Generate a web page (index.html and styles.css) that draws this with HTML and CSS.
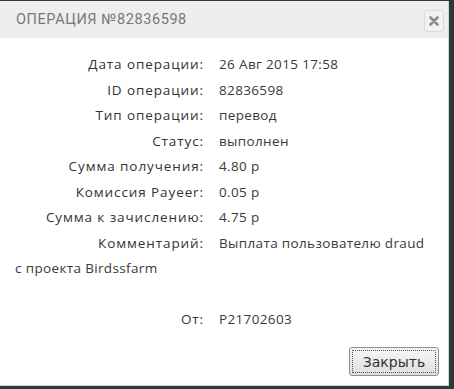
FILE: index.html
```html
<!DOCTYPE html>
<html lang="ru">
<head>
  <meta charset="UTF-8" />
  <title>Операция №82836598</title>
  <link rel="stylesheet" href="styles.css">
</head>
<body>
  <div class="dialog">
    <div class="dialog-head">
      <span class="dialog-title">Операция №82836598</span>
      <button class="dialog-close" aria-label="Закрыть">
        <svg width="10" height="10" viewBox="0 0 10 10">
          <path d="M1.5 1.5 L8.5 8.5 M8.5 1.5 L1.5 8.5" stroke="#8a8a8a" stroke-width="2.6" stroke-linecap="round" />
        </svg>
      </button>
    </div>

    <div class="dialog-body">
      <div class="row"><span class="label">Дата операции:</span><span class="value">26 Авг 2015 17:58</span></div>
      <div class="row"><span class="label">ID операции:</span><span class="value">82836598</span></div>
      <div class="row"><span class="label">Тип операции:</span><span class="value">перевод</span></div>
      <div class="row"><span class="label">Статус:</span><span class="value">выполнен</span></div>
      <div class="row"><span class="label">Сумма получения:</span><span class="value">4.80 р</span></div>
      <div class="row"><span class="label">Комиссия Payeer:</span><span class="value">0.05 р</span></div>
      <div class="row"><span class="label">Сумма к зачислению:</span><span class="value">4.75 р</span></div>
      <div class="row"><span class="label">Комментарий:</span><span class="value">Выплата пользователю draud<br>с проекта Birdssfarm</span></div>
      <div class="row row-empty"></div>
      <div class="row"><span class="label">От:</span><span class="value">P21702603</span></div>
    </div>

    <div class="dialog-foot">
      <button class="btn">Закрыть</button>
    </div>
  </div>
</body>
</html>
```

FILE: styles.css
```css
body {
  margin: 0;
  background: #2b393e;
  height: 389px;
  overflow: hidden;
}

.dialog {
  margin-top: 1px;
  width: 449px;
  height: 385px;
  background: #fff;
  border-right: 1px solid #d4d4d4;
  border-bottom: 1px solid #d4d4d4;
  box-sizing: border-box;
  display: flex;
  flex-direction: column;
  font-family: "Open Sans", sans-serif;
}

.dialog-head {
  height: 37px;
  background: #eeeeee;
  display: flex;
  align-items: center;
  justify-content: space-between;
  padding: 0 4px 0 16px;
}

.dialog-title {
  font-family: Roboto, sans-serif;
  font-size: 14.5px;
  text-transform: uppercase;
  letter-spacing: 0.6px;
  color: #787878;
  margin-top: -1px;
}

.dialog-close {
  width: 20px;
  height: 22px;
  padding: 0;
  border: 1px solid #dadada;
  border-radius: 3px;
  background: #f1f1f1;
  display: flex;
  align-items: center;
  justify-content: center;
  margin-top: 3px;
}

.dialog-body {
  padding: 14px 0 0 15px;
  font-size: 13.5px;
  letter-spacing: 0.35px;
  line-height: 25.5px;
  color: #3a3a3a;
}

.row-empty {
  height: 25.5px;
}

.label {
  display: inline-block;
  width: 189px;
  margin-right: 15px;
  text-align: right;
  letter-spacing: 0.9px;
  color: #333;
}

.dialog-foot {
  margin-top: auto;
  display: flex;
  justify-content: flex-end;
  padding: 0 9px 9px 0;
}

.btn {
  width: 90px;
  height: 29px;
  border: 1px solid #8f8f8f;
  border-radius: 3px;
  background: linear-gradient(#f7f7f7, #dedede);
  font-family: "DejaVu Sans", sans-serif;
  font-size: 14px;
  letter-spacing: 0;
  color: #333;
  outline: 1px dotted #555;
  outline-offset: -4px;
  padding: 0;
}
```
